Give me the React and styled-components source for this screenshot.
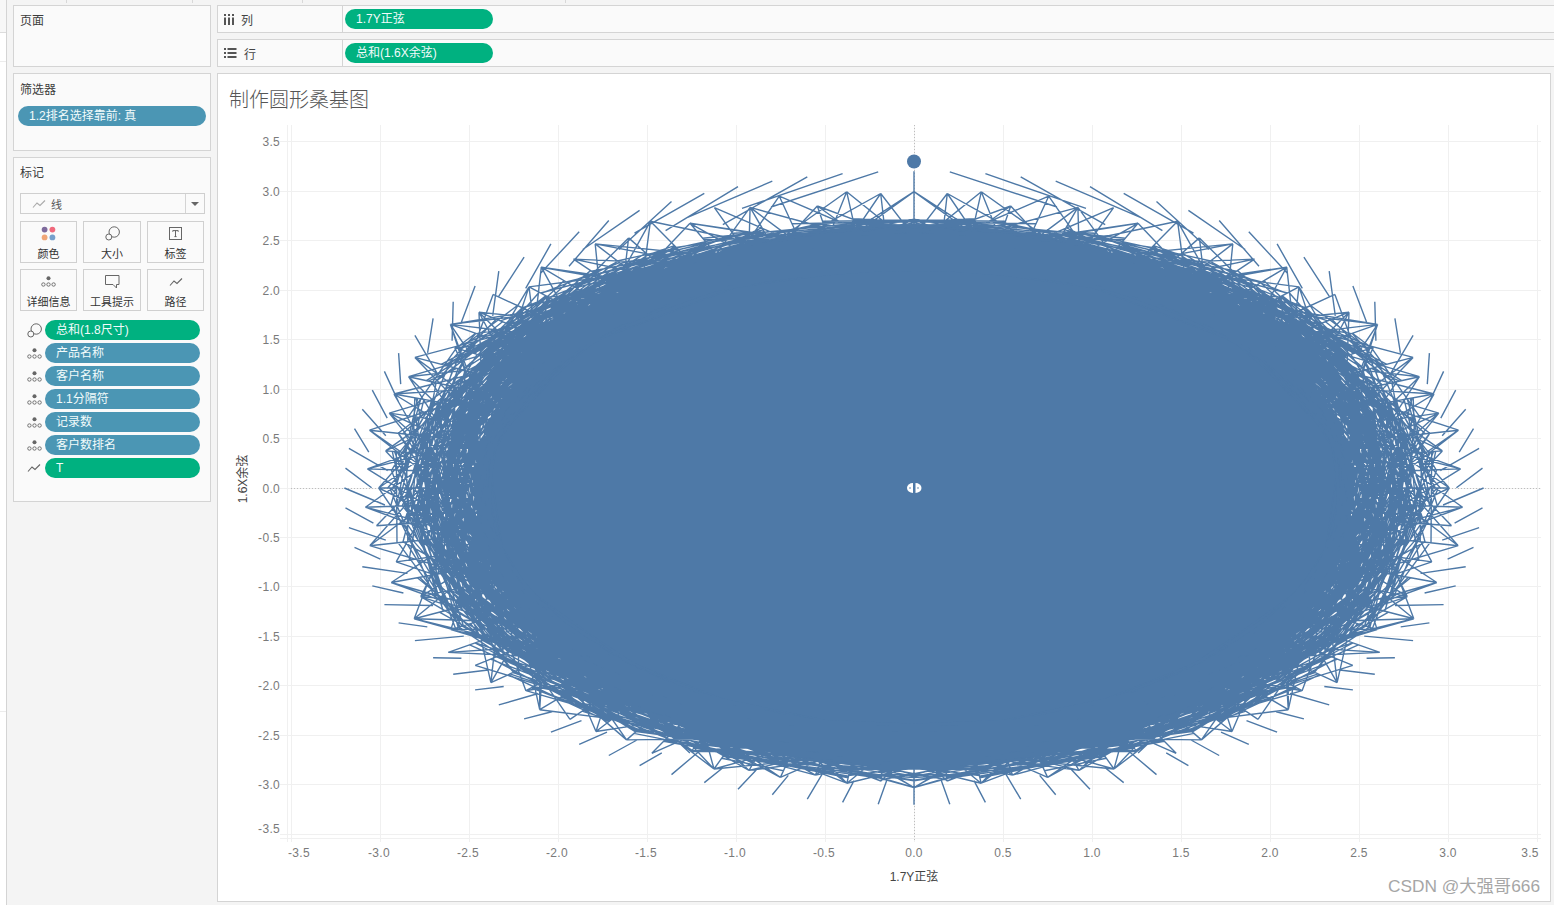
import React, { useMemo } from "react";
import styled, { createGlobalStyle } from "styled-components";

const Global = createGlobalStyle`
  html, body { margin: 0; padding: 0; background: #f4f4f4; }
  body { font-family: "Liberation Sans", "Noto Sans CJK SC", sans-serif; font-size: 12px; color: #444; }
  * { box-sizing: border-box; }
`;

const Page = styled.div`
  display: flex;
  width: 1554px;
  height: 905px;
  overflow: hidden;
  background: #f4f4f4;
`;
const Rail = styled.div`
  width: 7px;
  flex: none;
  background: #fff;
  border-right: 1px solid #d4d4d4;
  display: flex;
  flex-direction: column;
`;
const RailHead = styled.div`
  height: 33px;
  background: #f7f7f7;
  border-bottom: 1px solid #dcdcdc;
`;
const RailRow = styled.div`
  height: ${(p) => p.$h}px;
  border-bottom: 1px solid #ececec;
`;
const Content = styled.div`
  flex: 1;
  min-width: 0;
  display: flex;
  flex-direction: column;
`;
const TopStrip = styled.div`
  height: 5px;
  flex: none;
  display: flex;
`;
const TopCell = styled.div`
  width: ${(p) => p.$w}px;
  height: 3px;
  border-right: 1px solid #d8d8d8;
`;
const Body = styled.div`
  flex: 1;
  display: flex;
  gap: 6px;
  padding-left: 6px;
`;
const Sidebar = styled.div`
  width: 198px;
  flex: none;
  display: flex;
  flex-direction: column;
  gap: 6px;
`;
const Panel = styled.section`
  height: ${(p) => p.$h}px;
  background: #fafafa;
  border: 1px solid #d4d4d4;
  padding: 0 5px 0 6px;
`;
const PanelTitle = styled.div`
  height: ${(p) => p.$h}px;
  display: flex;
  align-items: center;
  font-size: 12px;
  color: #3c3c3c;
`;
const Pill = styled.div`
  height: 20px;
  border-radius: 10px;
  background: ${(p) => (p.$kind === "green" ? "#00b180" : "#4b96b4")};
  color: #f2fbfb;
  font-size: 12px;
  line-height: 20px;
  padding-left: 11px;
  white-space: nowrap;
`;
const FilterPill = styled(Pill)`
  margin: 4px -1px 0 -2px;
`;
const Dropdown = styled.div`
  height: 21px;
  margin-top: 8px;
  display: flex;
  align-items: center;
  border: 1px solid #cfcfcf;
  background: #fafafa;
  font-size: 11px;
  color: #555;
`;
const DropLabel = styled.div`
  flex: 1;
  display: flex;
  align-items: center;
  gap: 5px;
  padding-left: 11px;
`;
const DropCaret = styled.div`
  width: 19px;
  height: 100%;
  border-left: 1px solid #d4d4d4;
  display: flex;
  align-items: center;
  justify-content: center;
  &::after {
    content: "";
    border-left: 4px solid transparent;
    border-right: 4px solid transparent;
    border-top: 4px solid #666;
  }
`;
const CardGrid = styled.div`
  margin-top: 7px;
  display: grid;
  grid-template-columns: 57px 58px 57px;
  grid-auto-rows: 42px;
  column-gap: 6px;
  row-gap: 6px;
`;
const Card = styled.div`
  border: 1px solid #d0d0d0;
  background: #fafafa;
  display: flex;
  flex-direction: column;
  align-items: center;
  padding-top: 2px;
  font-size: 11px;
  line-height: 14px;
  color: #333;
  white-space: nowrap;
`;
const CardIcon = styled.div`
  height: 19px;
  display: flex;
  align-items: center;
  margin-bottom: 4px;
`;
const FieldList = styled.div`
  margin-top: 9px;
  display: flex;
  flex-direction: column;
  gap: 3px;
`;
const FieldRow = styled.div`
  display: flex;
  align-items: center;
`;
const FieldIcon = styled.div`
  width: 25px;
  padding-left: 7px;
  display: flex;
  align-items: center;
`;
const FieldPill = styled(Pill)`
  width: 155px;
`;
const Main = styled.div`
  flex: 1;
  min-width: 0;
  display: flex;
  flex-direction: column;
  gap: 6px;
`;
const Shelf = styled.div`
  height: 28px;
  flex: none;
  display: flex;
  background: #fafafa;
  border: 1px solid #d4d4d4;
  border-right: none;
`;
const ShelfLabel = styled.div`
  width: 125px;
  border-right: 1px solid #d4d4d4;
  display: flex;
  align-items: center;
  gap: 7px;
  padding-left: 6px;
  font-size: 12px;
  color: #444;
`;
const ShelfBody = styled.div`
  padding: 3px 0 0 2px;
`;
const ShelfPill = styled(Pill)`
  width: 148px;
`;
const Viz = styled.div`
  position: relative;
  height: 829px;
  margin-right: 3px;
  background: #fff;
  border: 1px solid #d4d4d4;
  display: flex;
  flex-direction: column;
`;
const VizTitle = styled.h1`
  margin: 0;
  height: 51px;
  flex: none;
  padding: 14px 0 0 11px;
  font-family: "Noto Sans CJK SC", sans-serif;
  font-size: 20px;
  line-height: 22px;
  font-weight: 300;
  color: #555;
`;
const Watermark = styled.div`
  position: absolute;
  right: 10px;
  bottom: 3px;
  font-size: 17.3px;
  line-height: 24px;
  color: #a6a6a6;
  white-space: nowrap;
`;
const ChartSvg = styled.svg`
  display: block;
  flex: none;
`;
const AxisLabel = styled.text`
  font-family: "Liberation Sans", sans-serif;
  font-size: 12px;
  letter-spacing: 0.3px;
  fill: #7a7a7a;
`;
const AxisTitle = styled.text`
  font-family: "Liberation Sans", "Noto Sans CJK SC", sans-serif;
  font-size: 12px;
  fill: #444;
`;

/* ---------- icons ---------- */
const Svg = ({ w, h, children }) => (
  <svg width={w} height={h} viewBox={`0 0 ${w} ${h}`} fill="none">{children}</svg>
);
const PathIcon = ({ c = "#666" }) => (
  <Svg w={14} h={10}>
    <path d="M1 8.5 L5 4 L8 6.5 L13 1.5" stroke={c} strokeWidth="1.1" />
  </Svg>
);
const SizeIcon = () => (
  <Svg w={15} h={15}>
    <circle cx="9.2" cy="6" r="5.2" stroke="#666" strokeWidth="1" />
    <circle cx="3.8" cy="11" r="3" stroke="#666" strokeWidth="1" fill="#fafafa" />
  </Svg>
);
const DetailIcon = () => (
  <Svg w={15} h={11}>
    <circle cx="7.5" cy="2.2" r="2" fill="#666" />
    <circle cx="2.4" cy="8.5" r="1.7" stroke="#666" strokeWidth=".9" />
    <circle cx="7.5" cy="8.5" r="1.7" stroke="#666" strokeWidth=".9" />
    <circle cx="12.6" cy="8.5" r="1.7" stroke="#666" strokeWidth=".9" />
  </Svg>
);
const ColorIcon = () => (
  <Svg w={15} h={15}>
    <circle cx="3.6" cy="3.6" r="2.9" fill="#7e6a9c" />
    <circle cx="11.4" cy="3.6" r="2.9" fill="#f0697c" />
    <circle cx="3.6" cy="11.4" r="2.9" fill="#f0a677" />
    <circle cx="11.4" cy="11.4" r="2.9" fill="#76a0cc" />
  </Svg>
);
const LabelIcon = () => (
  <Svg w={13} h={13}>
    <rect x=".5" y=".5" width="12" height="12" stroke="#666" />
    <path d="M3.8 3.6 H9.2 M6.5 3.6 V9.6 M5.4 9.6 H7.6 M3.8 3.6 V4.8 M9.2 3.6 V4.8" stroke="#555" strokeWidth=".9" />
  </Svg>
);
const TooltipIcon = () => (
  <Svg w={15} h={14}>
    <path d="M.5 .5 H14 V9.5 H11.5 V13 L8 9.5 H.5 Z" stroke="#666" strokeWidth="1" />
  </Svg>
);
const ColumnsIcon = () => (
  <Svg w={10} h={11}>
    <path d="M1 0 V2 M5 0 V2 M9 0 V2" stroke="#555" strokeWidth="2" />
    <path d="M1 3.5 V11 M5 3.5 V11 M9 3.5 V11" stroke="#555" strokeWidth="2" />
  </Svg>
);
const RowsIcon = () => (
  <Svg w={13} h={10}>
    <path d="M0 1 H2 M0 5 H2 M0 9 H2" stroke="#555" strokeWidth="2" />
    <path d="M3.5 1 H12.5 M3.5 5 H12.5 M3.5 9 H12.5" stroke="#555" strokeWidth="2" />
  </Svg>
);

/* ---------- chart ---------- */
const CX = 914;
const CY = 488;
const UX = 178;
const UY = 99;
const STEP = (Math.PI * 2) / 100;
const px = (r, t) => CX + UX * r * Math.sin(t);
const py = (r, t) => CY - UY * r * Math.cos(t);
/* the solid core sits lower than the ring: pull the mesh in near the top */
const squeeze = (t) => {
  const c = Math.cos(t);
  return c > 0 ? 1 - 0.075 * c * c * c : 1;
};

function makeRng(seed) {
  let s = seed;
  return () => {
    s = (s * 1664525 + 1013904223) % 4294967296;
    return s / 4294967296;
  };
}

function buildNetwork() {
  const rnd = makeRng(20240);
  const seg = [];
  const add = (r1, t1, r2, t2) => seg.push([r1, t1, r2, t2]);
  const nodeR = [];
  for (let i = 0; i <= 56; i++) {
    const side = Math.sin(i * STEP);
    nodeR.push(2.99 + 0.08 * side + (i % 2 === 0 ? 0.05 * rnd() : -0.12 * rnd()));
  }

  for (let i = 0; i <= 50; i++) {
    const t = i * STEP;
    if (i === 0) {
      add(3.2, 0, 2.99, 0);
      continue;
    }
    const rest = Math.max(0, 1 - t / Math.PI);
    const delta = 0.012 + 0.21 * Math.pow(rest, 2.2);
    add(3.2, t, nodeR[i] - 0.03, i === 50 ? t : t + delta);
  }
  for (let i = 0; i <= 50; i++) {
    const t = i * STEP;
    for (const k of [-3, -2, -1, 1, 2, 3]) {
      if (i + k < 0 || i + k > 56) continue;
      const t2 = (i + k) * STEP;
      if (rnd() < 0.55) add(nodeR[i], t, (2.88 - rnd() * 0.24) * squeeze(t2), t2);
    }
    add(nodeR[i], t, 2.74 * squeeze(t), t);
  }
  const mesh = (count, lo, hi, span) => {
    for (let n = 0; n < count; n++) {
      const i = Math.floor(rnd() * 51);
      const k = Math.floor(rnd() * (span * 2 + 1)) - span;
      const t1 = i * STEP;
      const t2 = (i + k) * STEP;
      add((lo + (hi - lo) * rnd()) * squeeze(t1), t1, (lo + (hi - lo) * rnd()) * squeeze(t2), t2);
    }
  };
  mesh(380, 2.74, 2.96, 6);
  mesh(1000, 2.58, 2.82, 7);
  mesh(1150, 2.4, 2.66, 8);
  let d = "";
  const fx = (v) => v.toFixed(1);
  for (const [r1, t1, r2, t2] of seg) {
    d += `M${fx(px(r1, t1))} ${fx(py(r1, t1))}L${fx(px(r2, t2))} ${fx(py(r2, t2))}`;
    if (t1 !== 0 || t2 !== 0) d += `M${fx(px(r1, -t1))} ${fx(py(r1, -t1))}L${fx(px(r2, -t2))} ${fx(py(r2, -t2))}`;
  }
  return d;
}

const XTICKS = [-3.5, -3, -2.5, -2, -1.5, -1, -0.5, 0, 0.5, 1, 1.5, 2, 2.5, 3, 3.5];
const YPOS = { 3.5: 141, 3: 191, 2.5: 240, 2: 290, 1.5: 339, 1: 389, 0.5: 438, 0: 488, "-0.5": 537, "-1": 586, "-1.5": 636, "-2": 685, "-2.5": 735, "-3": 784, "-3.5": 834 };
const YTICKS = [3.5, 3, 2.5, 2, 1.5, 1, 0.5, 0, -0.5, -1, -1.5, -2, -2.5, -3, -3.5];
const GRID = "#f0f0f0";

function Chart() {
  const d = useMemo(buildNetwork, []);
  return (
    <ChartSvg width="1332" height="776" viewBox="218 125 1332 776">
      {XTICKS.map((v) => {
        const x = CX + v * UX;
        return <line key={v} x1={x + 0.5} x2={x + 0.5} y1="125" y2="842" stroke={GRID} />;
      })}
      {YTICKS.map((v) => (
        <line key={v} x1="280" x2="1541" y1={YPOS[v] + 0.5} y2={YPOS[v] + 0.5} stroke={GRID} />
      ))}
      <line x1="287.5" x2="287.5" y1="125" y2="842" stroke={GRID} />
      <line x1="280" x2="1541" y1="838.5" y2="838.5" stroke={GRID} />
      <line x1="914.5" x2="914.5" y1="125" y2="842" stroke="#bdbdbd" strokeDasharray="1 2" />
      <line x1="291" x2="1541" y1="488.5" y2="488.5" stroke="#bdbdbd" strokeDasharray="1 2" />

      <ellipse cx="914" cy="496" rx="438" ry="272" fill="#4e79a7" />
      <path d={d} stroke="#4e79a7" strokeWidth="1.4" fill="none" />
      <circle cx="914" cy="161.5" r="7" fill="#4e79a7" />
      <path d="M913 483 A6 5 0 0 0 913 493 Z" fill="#fff" />
      <path d="M915.5 483 A6 5 0 0 1 915.5 493 Z" fill="#fff" />
      <circle cx="910" cy="488" r=".8" fill="#4e79a7" />
      <circle cx="918" cy="488" r=".8" fill="#4e79a7" />

      {XTICKS.map((v) => {
        const x = v === -3.5 ? 299 : v === 3.5 ? 1530 : CX + v * UX + (v < 0 ? -1 : 0);
        return <AxisLabel key={v} x={x} y="857" textAnchor="middle">{v.toFixed(1)}</AxisLabel>;
      })}
      {YTICKS.map((v) => (
        <AxisLabel key={v} x="280" y={(v === -3.5 ? 828 : YPOS[v]) + 4.5} textAnchor="end">{v.toFixed(1)}</AxisLabel>
      ))}
      <AxisTitle x="914" y="881" textAnchor="middle">1.7Y正弦</AxisTitle>
      <AxisTitle x="247" y="479" textAnchor="middle" transform="rotate(-90 247 479)">1.6X余弦</AxisTitle>
    </ChartSvg>
  );
}

const CARDS = [
  ["颜色", <ColorIcon key="a" />],
  ["大小", <SizeIcon key="b" />],
  ["标签", <LabelIcon key="c" />],
  ["详细信息", <DetailIcon key="d" />],
  ["工具提示", <TooltipIcon key="e" />],
  ["路径", <PathIcon key="f" />],
];
const FIELDS = [
  ["总和(1.8尺寸)", "green", <SizeIcon key="a" />],
  ["产品名称", "blue", <DetailIcon key="b" />],
  ["客户名称", "blue", <DetailIcon key="c" />],
  ["1.1分隔符", "blue", <DetailIcon key="d" />],
  ["记录数", "blue", <DetailIcon key="e" />],
  ["客户数排名", "blue", <DetailIcon key="f" />],
  ["T", "green", <PathIcon key="g" />],
];

export default function App() {
  return (
    <Page>
      <Global />
      <Rail>
        <RailHead />
        <RailRow $h={29} />
        <RailRow $h={650} />
      </Rail>
      <Content>
        <TopStrip>
          <TopCell $w={60} />
          <TopCell $w={126} />
          <TopCell $w={110} />
          <TopCell $w={263} />
        </TopStrip>
        <Body>
          <Sidebar>
            <Panel $h={62}>
              <PanelTitle $h={26}>页面</PanelTitle>
            </Panel>
            <Panel $h={78}>
              <PanelTitle $h={28}>筛选器</PanelTitle>
              <FilterPill $kind="blue">1.2排名选择靠前: 真</FilterPill>
            </Panel>
            <Panel $h={345}>
              <PanelTitle $h={27}>标记</PanelTitle>
              <Dropdown>
                <DropLabel><PathIcon c="#aaa" />线</DropLabel>
                <DropCaret />
              </Dropdown>
              <CardGrid>
                {CARDS.map(([label, icon]) => (
                  <Card key={label}>
                    <CardIcon>{icon}</CardIcon>
                    {label}
                  </Card>
                ))}
              </CardGrid>
              <FieldList>
                {FIELDS.map(([label, kind, icon]) => (
                  <FieldRow key={label}>
                    <FieldIcon>{icon}</FieldIcon>
                    <FieldPill $kind={kind}>{label}</FieldPill>
                  </FieldRow>
                ))}
              </FieldList>
            </Panel>
          </Sidebar>
          <Main>
            <Shelf>
              <ShelfLabel><ColumnsIcon />列</ShelfLabel>
              <ShelfBody><ShelfPill $kind="green">1.7Y正弦</ShelfPill></ShelfBody>
            </Shelf>
            <Shelf>
              <ShelfLabel><RowsIcon />行</ShelfLabel>
              <ShelfBody><ShelfPill $kind="green">总和(1.6X余弦)</ShelfPill></ShelfBody>
            </Shelf>
            <Viz>
              <VizTitle>制作圆形桑基图</VizTitle>
              <Chart />
              <Watermark>CSDN @大强哥666</Watermark>
            </Viz>
          </Main>
        </Body>
      </Content>
    </Page>
  );
}
